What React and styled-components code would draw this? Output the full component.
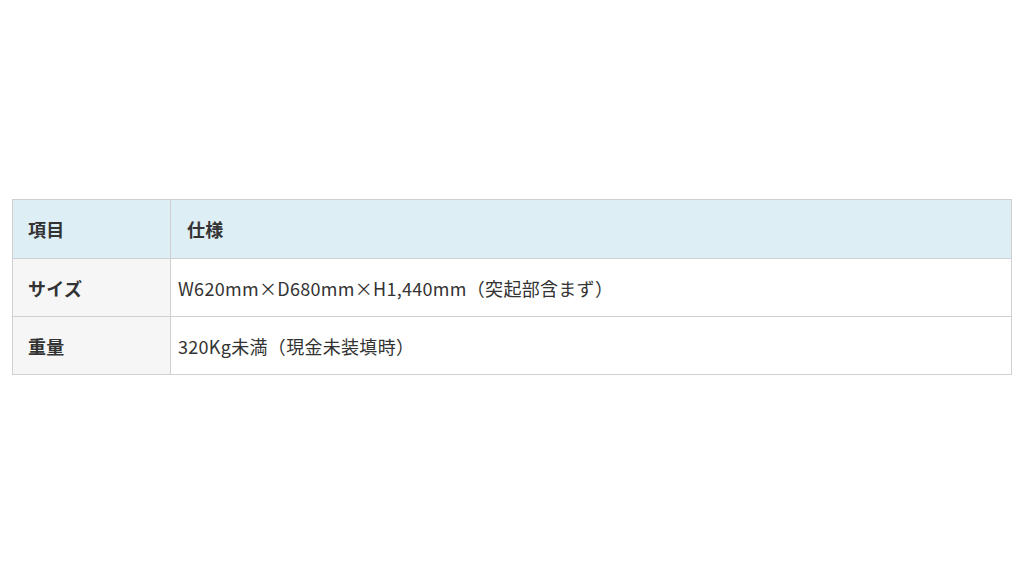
import React from "react";
import styled, { createGlobalStyle } from "styled-components";

const Global = createGlobalStyle`
  html, body { margin: 0; padding: 0; background: #fff; }
  body { font-family: "Noto Sans CJK JP", "Noto Sans", sans-serif; color: #333; }
`;

const Page = styled.div`
  width: 1024px;
  height: 576px;
  box-sizing: border-box;
  padding: 199px 12px 0 12px;
`;

const Table = styled.table`
  width: 1000px;
  border-collapse: collapse;
  table-layout: fixed;
  font-size: 18px;
  letter-spacing: 0.3px;
  border: 1px solid #d0d0d0;
`;

const Th = styled.th`
  background: #ddeef5;
  height: 58px;
  padding: 0 0 0 ${(p) => p.$pad}px;
  text-align: left;
  font-weight: 700;
  color: #333;
  border: 1px solid #d0d0d0;
  vertical-align: middle;
`;

const Label = styled.td`
  background: #f6f6f6;
  height: 57px;
  padding: 0 0 0 15px;
  font-weight: 700;
  color: #333;
  border: 1px solid #d0d0d0;
  vertical-align: middle;
`;

const Value = styled.td`
  background: #fff;
  height: 57px;
  padding: 0 0 0 7px;
  color: #333;
  border: 1px solid #d0d0d0;
  vertical-align: middle;
`;

const rows = [
  ["サイズ", "W620mm×D680mm×H1,440mm（突起部含まず）"],
  ["重量", "320Kg未満（現金未装填時）"],
];

export default function App() {
  return (
    <>
      <Global />
      <Page>
        <Table>
          <colgroup>
            <col style={{ width: 158 }} />
            <col />
          </colgroup>
          <thead>
            <tr>
              <Th $pad={15}>項目</Th>
              <Th $pad={16}>仕様</Th>
            </tr>
          </thead>
          <tbody>
            {rows.map(([k, v]) => (
              <tr key={k}>
                <Label>{k}</Label>
                <Value>{v}</Value>
              </tr>
            ))}
          </tbody>
        </Table>
      </Page>
    </>
  );
}
